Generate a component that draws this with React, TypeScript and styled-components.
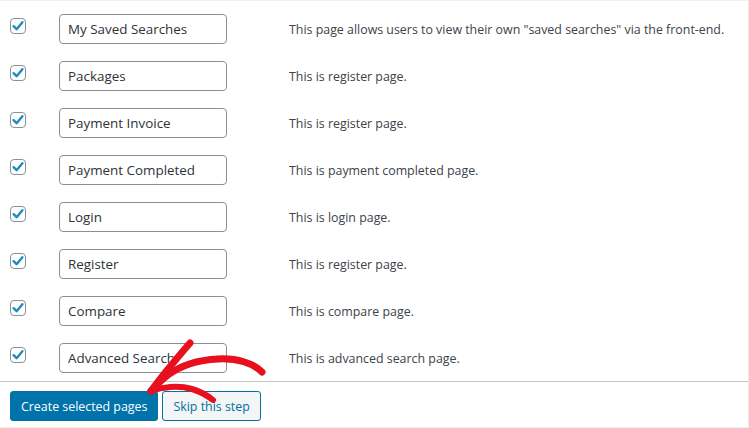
import styled, { createGlobalStyle } from 'styled-components';

const GlobalStyle = createGlobalStyle`
  html, body {
    margin: 0;
    padding: 0;
    background: #ffffff;
  }
  body {
    font-family: "Open Sans", "Noto Sans", sans-serif;
    color: #3c434a;
  }
`;

const Panel = styled.div`
  position: relative;
  box-sizing: border-box;
  width: 749px;
  height: 428px;
  border-top: 1px solid #f0f0f1;
  border-right: 1px solid #ebebeb;
  border-bottom: 1px solid #f0f0f1;
  background: #ffffff;
  display: flex;
  flex-direction: column;
  overflow: hidden;
`;

const Rows = styled.div`
  padding-top: 4px;
  height: 381px;
  box-sizing: border-box;
  border-bottom: 1px solid #c3c4c7;
`;

const Row = styled.div`
  display: grid;
  grid-template-columns: 59px 230px 1fr;
  align-items: start;
  height: 47px;
`;

const CheckCell = styled.div`
  padding: 13px 0 0 10px;
`;

const CheckBox = styled.span`
  display: flex;
  align-items: center;
  justify-content: center;
  box-sizing: border-box;
  width: 16px;
  height: 16px;
  border: 1px solid #8c8f94;
  border-radius: 4px;
  background: #ffffff;
`;

const TitleInput = styled.input`
  box-sizing: border-box;
  margin-top: 9px;
  width: 168px;
  height: 30px;
  padding: 0 8px;
  border: 1px solid #8c8f94;
  border-radius: 4px;
  font-family: "Open Sans", "Noto Sans", sans-serif;
  font-size: 13.4px;
  color: #2c3338;
  background: #ffffff;
  outline: none;
`;

const Description = styled.div`
  margin-top: 16px;
  font-size: 12.4px;
  line-height: 18px;
  color: #3c434a;
  white-space: nowrap;
`;

const Footer = styled.div`
  display: flex;
  gap: 4px;
  padding: 9px 0 0 10px;
`;

const Button = styled.button<{ $primary?: boolean }>`
  box-sizing: border-box;
  height: 30px;
  padding: 0 10px;
  border-radius: 3px;
  border: 1px solid #0071a1;
  background: ${(p) => (p.$primary ? '#0073aa' : '#f3f5f6')};
  color: ${(p) => (p.$primary ? '#ffffff' : '#0071a1')};
  font-family: "Open Sans", "Noto Sans", sans-serif;
  font-size: 12.4px;
  cursor: pointer;
`;

// hand-drawn red arrow pointing at the primary button
const Arrow = styled.svg`
  position: absolute;
  left: 0;
  top: 0;
  pointer-events: none;
`;

const pages = [
  ['My Saved Searches', 'This page allows users to view their own "saved searches" via the front-end.'],
  ['Packages', 'This is register page.'],
  ['Payment Invoice', 'This is register page.'],
  ['Payment Completed', 'This is payment completed page.'],
  ['Login', 'This is login page.'],
  ['Register', 'This is register page.'],
  ['Compare', 'This is compare page.'],
  ['Advanced Search', 'This is advanced search page.'],
];

function Check() {
  return (
    <CheckBox>
      <svg width="14" height="14" viewBox="0 0 14 14">
        <path d="M2.6 7.2 L5.6 10.2 L11.4 3.2" fill="none" stroke="#1e8cbe" strokeWidth="2.4" strokeLinecap="round" strokeLinejoin="round" />
      </svg>
    </CheckBox>
  );
}

export default function App() {
  return (
    <>
      <GlobalStyle />
      <Panel>
        <Rows>
          {pages.map(([title, desc]) => (
            <Row key={title}>
              <CheckCell>
                <Check />
              </CheckCell>
              <div>
                <TitleInput defaultValue={title} />
              </div>
              <Description>{desc}</Description>
            </Row>
          ))}
        </Rows>
        <Footer>
          <Button $primary>Create selected pages</Button>
          <Button>Skip this step</Button>
        </Footer>
        <Arrow width="749" height="428" viewBox="0 0 749 428">
          <g fill="none" stroke="#e8101e" strokeLinecap="round" strokeLinejoin="round">
            <path d="M262 371 C253 362 237 357 218 358 C198 359 180 365 168 374 C160 380 155 386 151 390" strokeWidth="7" />
            <path d="M190 342 C178 356 165 371 151 390" strokeWidth="7" />
            <path d="M151 390 C162 386 178 384 192 388 C202 391 208 395 213 399" strokeWidth="6" />
          </g>
        </Arrow>
      </Panel>
    </>
  );
}
